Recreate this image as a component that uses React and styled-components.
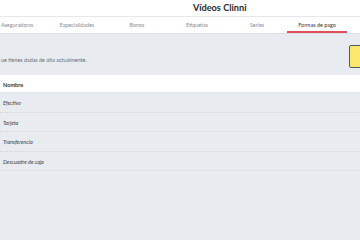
import React from "react";
import styled, { createGlobalStyle } from "styled-components";

const tabs = ["Aseguradoras", "Especialidades", "Bonos", "Etiquetas", "Series", "Formas de pago"];
const rows = ["Efectivo", "Tarjeta", "Transferencia", "Descuadre de caja"];

const App = () => {
  return (
    <Page>
      <GlobalStyle />
      <TopBar>
        <Title>Vídeos Clinni</Title>
      </TopBar>
      <TabBar>
        {tabs.map((t, i) => (
          <Tab key={t} active={i === tabs.length - 1}>
            {t}
          </Tab>
        ))}
      </TabBar>
      <Intro>
        <IntroText>ue tienes dadas de alta actualmente.</IntroText>
        <AddButton />
      </Intro>
      <Table>
        <HeadRow>Nombre</HeadRow>
        {rows.map((r, i) => (
          <Row key={r} last={i === rows.length - 1}>
            {r}
          </Row>
        ))}
      </Table>
    </Page>
  );
};

const GlobalStyle = createGlobalStyle`
  html, body {
    margin: 0;
    padding: 0;
    background: #e8ebef;
  }
  * {
    box-sizing: border-box;
  }
`;

const Page = styled.div`
  width: 360px;
  height: 240px;
  overflow: hidden;
  font-family: Lato, "Open Sans", sans-serif;
  background: #e8ebef;
`;

const TopBar = styled.div`
  height: 17px;
  background: #fff;
  border-bottom: 1px solid #e6e8eb;
  display: flex;
  align-items: center;
  padding-left: 193px;
`;

const Title = styled.h1`
  margin: 0;
  font-size: 9.2px;
  font-weight: 700;
  color: #2b2b2b;
  line-height: 1;
  margin-top: -1px;
`;

const TabBar = styled.div`
  height: 17px;
  background: #fff;
  border-bottom: 1px solid #dcdfe3;
  display: flex;
  margin-left: -13px;
`;

const Tab = styled.div`
  width: 60px;
  flex: none;
  display: flex;
  align-items: center;
  justify-content: center;
  font-size: 5.4px;
  color: ${(p) => (p.active ? "#333" : "#8a8d91")};
  border-bottom: 2px solid ${(p) => (p.active ? "#e0505b" : "transparent")};
  padding-top: 1px;
`;

const Intro = styled.div`
  height: 41px;
  display: flex;
  align-items: flex-start;
  justify-content: space-between;
`;

const IntroText = styled.p`
  margin: 23px 0 0 1px;
  font-size: 5.4px;
  color: #6b6f74;
`;

const AddButton = styled.div`
  width: 16px;
  height: 23px;
  margin-top: 11px;
  margin-right: -5px;
  background: #fde86e;
  border: 1px solid #55585c;
  border-radius: 2px;
`;

const Table = styled.div`
  display: flex;
  flex-direction: column;
`;

const HeadRow = styled.div`
  height: 18px;
  background: #fff;
  border-bottom: 1px solid #e2e5e8;
  display: flex;
  align-items: center;
  padding-left: 3px;
  padding-top: 1px;
  font-size: 5.6px;
  font-weight: 700;
  color: #333;
`;

const Row = styled.div`
  height: 19.6px;
  display: flex;
  align-items: center;
  padding-left: 3px;
  padding-top: 2px;
  font-size: 5.4px;
  font-style: italic;
  color: #444;
  border-bottom: 1px ${(p) => (p.last ? "solid #e0e3e6" : "dotted #d3d6d9")};
`;

export default App;
